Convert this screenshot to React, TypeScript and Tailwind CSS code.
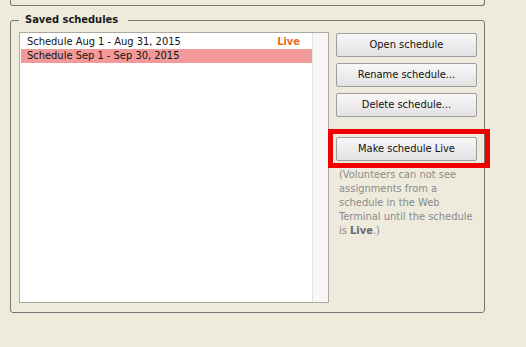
import React from "react";

const font = { fontFamily: '"DejaVu Sans Condensed", "DejaVu Sans", Tahoma, sans-serif' };

function Btn({ children }: { children: React.ReactNode }) {
  return (
    <button className="h-[24px] w-full border border-[#9d9d9d] rounded-[2px] bg-linear-to-b from-[#f8f8f8] to-[#e2e2e2] text-[11px] leading-[14px] text-[#111]">
      {children}
    </button>
  );
}

export default function App() {
  return (
    <div className="w-[526px] h-[347px] bg-[#eeebdd] overflow-hidden" style={font}>
      <div className="ml-[10px] w-[475px] h-[6px] border-x border-b border-[#767676] rounded-b-[3px]" />
      <div className="mt-[14px] ml-[10px] w-[475px] h-[293px] border border-[#767676] rounded-[3px] flex flex-col">
        <span className="-mt-[8px] ml-[8px] self-start px-[6px] pr-[10px] bg-[#eeebdd] font-bold text-[11px] leading-[14px] text-[#1a1a1a]">
          Saved schedules
        </span>
        <div className="flex mt-[5px] pl-[8px]">
          <div className="w-[310px] h-[271px] border border-[#aba99e] bg-white flex">
            <div className="flex-1 pt-[2px] pl-[1px] text-[11px] leading-[14px] text-[#111]">
              <div className="h-[14px] flex justify-between pl-[6px] pr-[12px]">
                <span>Schedule Aug 1 - Aug 31, 2015</span>
                <span className="font-bold text-[#ee6a24]">Live</span>
              </div>
              <div className="h-[14px] flex pl-[6px] bg-[#f29a9a]">
                <span>Schedule Sep 1 - Sep 30, 2015</span>
              </div>
            </div>
            <div className="w-[16px] border-l border-[#e2e2e2] bg-[#f7f7f7]" />
          </div>
          <div className="ml-[7px] mt-[1px] w-[141px] flex flex-col">
            <Btn>Open schedule</Btn>
            <div className="h-[6px]" />
            <Btn>Rename schedule...</Btn>
            <div className="h-[6px]" />
            <Btn>Delete schedule...</Btn>
            <div className="h-[18px]" />
            <div className="relative">
              <Btn>Make schedule Live</Btn>
              <div className="absolute -left-[8px] -top-[6px] w-[162px] h-[39px] border-[5px] border-[#f00000] pointer-events-none" />
            </div>
            <div className="mt-[7px] pl-[3px] text-[11px] leading-[14px] text-[#8a8a8a] whitespace-nowrap">
              (Volunteers can not see<br />
              assignments from a<br />
              schedule in the Web<br />
              Terminal until the schedule<br />
              is <span className="font-bold text-[#6a6a6a]">Live</span>.)
            </div>
          </div>
        </div>
      </div>
    </div>
  );
}
